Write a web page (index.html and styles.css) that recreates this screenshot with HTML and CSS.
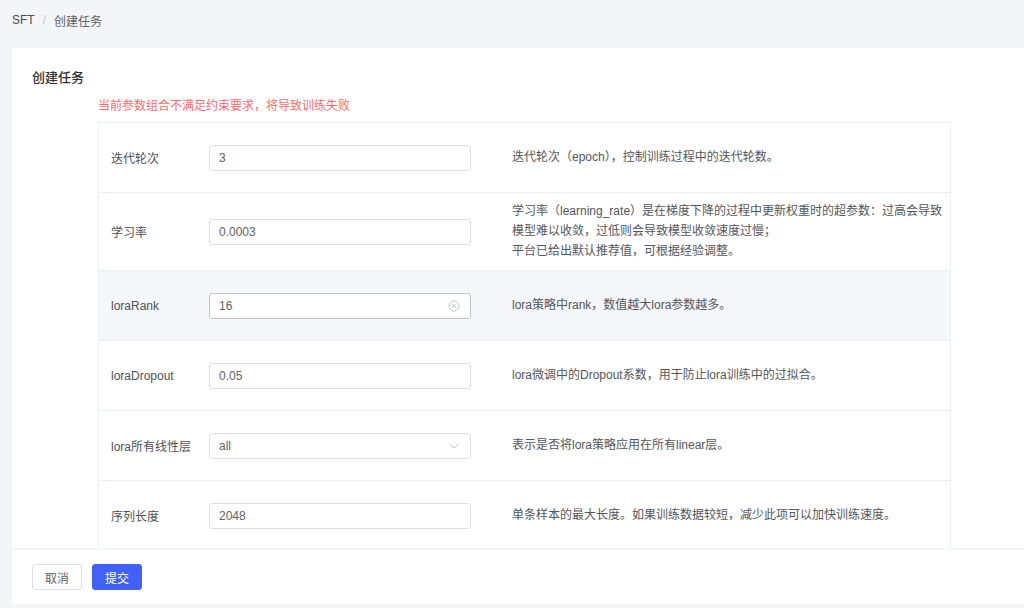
FILE: index.html
```html
<!DOCTYPE html>
<html lang="zh-CN">
<head>
    <meta charset="UTF-8">
    <meta name="viewport" content="width=device-width, initial-scale=1.0">
    <title>创建任务</title>
    <link rel="stylesheet" href="styles.css">
</head>
<body>
    <div class="crumb">
        <span class="crumb-item first">SFT</span>
        <span class="crumb-sep">/</span>
        <span class="crumb-item">创建任务</span>
    </div>

    <div class="card">
        <h3 class="title">创建任务</h3>
        <div class="form">
            <p class="error">当前参数组合不满足约束要求，将导致训练失败</p>

            <div class="params">
                <div class="row">
                    <div class="label">迭代轮次</div>
                    <div class="field"><div class="input">3</div></div>
                    <div class="desc">迭代轮次（epoch），控制训练过程中的迭代轮数。</div>
                </div>
                <div class="row">
                    <div class="label">学习率</div>
                    <div class="field"><div class="input">0.0003</div></div>
                    <div class="desc">学习率（learning_rate）是在梯度下降的过程中更新权重时的超参数：过高会导致<br>模型难以收敛，过低则会导致模型收敛速度过慢；<br>平台已给出默认推荐值，可根据经验调整。</div>
                </div>
                <div class="row hover">
                    <div class="label">loraRank</div>
                    <div class="field">
                        <div class="input active">
                            <span>16</span>
                            <svg class="suffix" width="12" height="12" viewBox="0 0 12 12">
                                <circle cx="6" cy="6" r="5" fill="none" stroke="#c0c4cc" stroke-width="1"/>
                                <path d="M4.2 4.2 L7.8 7.8 M7.8 4.2 L4.2 7.8" stroke="#c0c4cc" stroke-width="1"/>
                            </svg>
                        </div>
                    </div>
                    <div class="desc">lora策略中rank，数值越大lora参数越多。</div>
                </div>
                <div class="row">
                    <div class="label">loraDropout</div>
                    <div class="field"><div class="input">0.05</div></div>
                    <div class="desc">lora微调中的Dropout系数，用于防止lora训练中的过拟合。</div>
                </div>
                <div class="row">
                    <div class="label">lora所有线性层</div>
                    <div class="field">
                        <div class="input">
                            <span>all</span>
                            <svg class="suffix" width="12" height="12" viewBox="0 0 12 12">
                                <path d="M2 4.5 L6 8 L10 4.5" fill="none" stroke="#c0c4cc" stroke-width="1"/>
                            </svg>
                        </div>
                    </div>
                    <div class="desc">表示是否将lora策略应用在所有linear层。</div>
                </div>
                <div class="row">
                    <div class="label">序列长度</div>
                    <div class="field"><div class="input">2048</div></div>
                    <div class="desc">单条样本的最大长度。如果训练数据较短，减少此项可以加快训练速度。</div>
                </div>
            </div>
        </div>
    </div>

    <div class="footer">
        <button class="btn">取消</button>
        <button class="btn primary">提交</button>
    </div>
</body>
</html>
```

FILE: styles.css
```css
html, body {
    margin: 0;
    padding: 0;
    height: 608px;
    overflow: hidden;
}

body {
    background: #f4f5f9;
    font-family: "Liberation Sans", "Noto Sans CJK SC", sans-serif;
    font-size: 12px;
    color: #606266;
}

/* breadcrumb */
.crumb {
    height: 40px;
    padding-left: 12px;
    display: flex;
    align-items: center;
    gap: 8px;
    color: #606266;
}

.crumb-item.first {color: #4a4c52;}
.crumb-sep {color: #c0c4cc;}

/* card */
.card {
    margin: 8px 0 0 12px;
    height: 500px;
    background: #ffffff;
    overflow: hidden;
    box-sizing: border-box;
    padding: 21px 0 0 20px;
}

.title {
    margin: 0;
    font-size: 13px;
    line-height: 18px;
    font-weight: 500;
    color: #303133;
}

.form {
    margin-left: 66px;
    width: 853px;
}

.error {
    margin: 10px 0 7px;
    line-height: 18px;
    color: #f56c6c;
}

.params {
    border: 1px solid #ebeef5;
    border-bottom: none;
}

.row {
    display: grid;
    grid-template-columns: 110px 292px 1fr;
    align-items: center;
    min-height: 70px;
    border-bottom: 1px solid #ebeef5;
    box-sizing: border-box;
}

.row.hover {background: #f5f7fa;}

.label {
    padding-left: 12px;
    color: #4f5157;
}

.input {
    width: 262px;
    height: 26px;
    box-sizing: border-box;
    border: 1px solid #dcdfe6;
    border-radius: 3px;
    background: #ffffff;
    padding: 0 9px;
    display: flex;
    align-items: center;
    justify-content: space-between;
    color: #606266;
}

.input.active {border-color: #c0c4cc;}

.suffix {flex: none; margin-right: 1px;}

.desc {
    padding: 8px 0 9px 11px;
    line-height: 20px;
    color: #53565c;
    white-space: nowrap;
}

/* footer */
.footer {
    margin: 2px 0 0 12px;
    height: 54px;
    background: #ffffff;
    display: flex;
    align-items: center;
    gap: 10px;
    padding-left: 20px;
}

.btn {
    width: 50px;
    height: 26px;
    padding: 0;
    border: 1px solid #dcdfe6;
    border-radius: 3px;
    background: #ffffff;
    font-family: inherit;
    font-size: 12px;
    color: #606266;
}

.btn.primary {
    background: #4262f5;
    border-color: #4262f5;
    color: #ffffff;
}
```
